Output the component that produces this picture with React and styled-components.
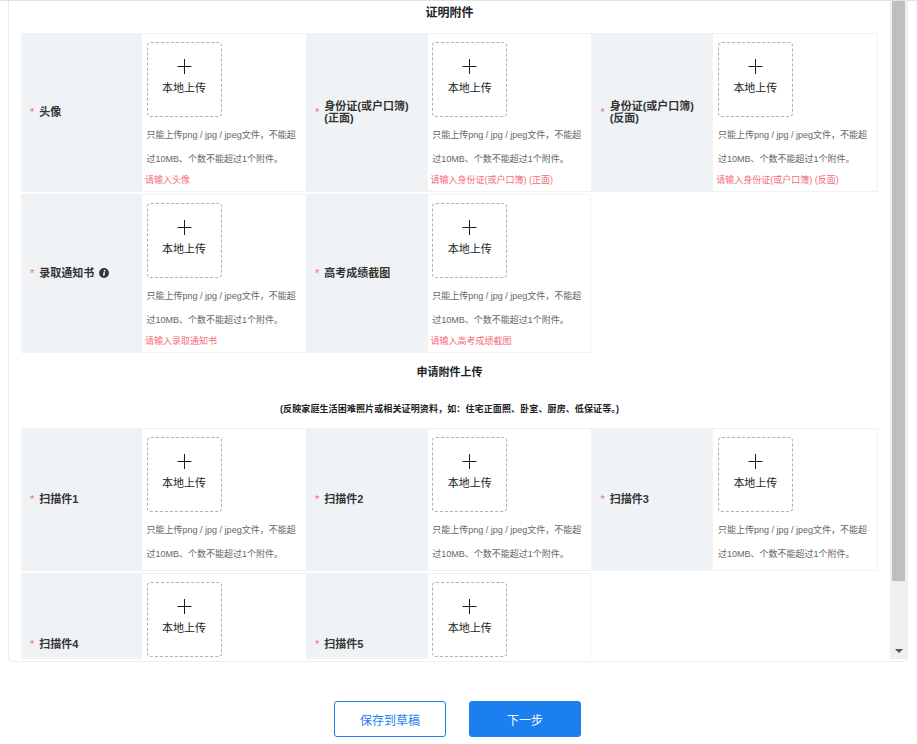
import React from "react";
import styled, { createGlobalStyle } from "styled-components";

const Global = createGlobalStyle`
  html, body { margin: 0; padding: 0; background: #fff; }
  body { font-family: "Liberation Sans", "Noto Sans CJK SC", sans-serif; }
  * { box-sizing: border-box; }
`;
const Page = styled.div`
  width: 917px; height: 744px; border-top: 1px solid #e2e2e2; overflow: hidden;
`;
const Panel = styled.div`
  margin: 0 9px 0 8px; height: 661px; padding-bottom: 2px; display: flex;
  border: 1px solid #eee; border-top: 0; border-radius: 0 0 5px 5px;
`;
const Viewport = styled.div`flex: 1; min-width: 0; overflow: hidden; padding: 0 12px;`;
const Title = styled.div`
  font-size: ${p => p.$size}px; font-weight: 700; color: #222; text-align: center; line-height: 16px;
  margin: ${p => p.$top}px 0 ${p => p.$bottom}px;
`;
const Note = styled.div`
  font-size: 9px; letter-spacing: .12px; font-weight: 700; color: #222; text-align: center; line-height: 14px; margin: 0 0 12px;
`;
const Table = styled.div`
  display: grid; grid-template-columns: 121px 164px 121.6px 163.8px 121.9px 165px; row-gap: 2px; width: 857px;
`;
const Label = styled.div`
  background: #f0f3f6; display: flex; align-items: center; padding-left: 9px;
  font-size: 11px; font-weight: 700; color: #333; line-height: 11.5px;
`;
const Star = styled.span`color: #f56c7a; font-weight: 400; margin-right: 5px; font-size: 11px; flex: none;`;
const Info = styled.span`display: inline-flex; margin-left: 5px; vertical-align: -1px;`;
const Value = styled.div`
  border: 1px solid #f2f2f2; border-left: 0; padding: 8px 4px 0 4.6px; height: ${p => p.$h}px; overflow: hidden;
  ${p => p.$end ? "" : "border-right: 0;"}
`;
const Upload = styled.div`
  width: 75px; height: 75px; border: 1px dashed #b0b0b0; border-radius: 4px;
  display: flex; flex-direction: column; align-items: center; padding-top: 16px;
  font-size: 11px; color: #222; line-height: 14px;
`;
const Plus = styled.svg`display: block; margin-bottom: 7px;`;
const Help = styled.div`
  font-size: 9px; color: #666; line-height: 24px; margin-top: 6px; width: 155px; white-space: pre;
`;
const Err = styled.div`
  font-size: 9px; color: #f56c7a; line-height: 18px; margin-left: -1.6px; white-space: nowrap;
`;
const Track = styled.div`
  width: 17px; flex: none; background: #efefef; position: relative; padding: 0 2px; height: 658px;
`;
const Thumb = styled.div`width: 13px; height: 580px; background: #bfbfbf;`;
const Arrow = styled.div`
  position: absolute; left: 5px; bottom: 6px; width: 0; height: 0;
  border-left: 4px solid transparent; border-right: 4px solid transparent; border-top: 4px solid #555;
`;
const Footer = styled.div`display: flex; justify-content: center; gap: 23px; margin-top: 39px; padding-right: 2px;`;
const Btn = styled.button`
  width: 112px; height: 36px; border-radius: 3px; font: 12px "Liberation Sans", "Noto Sans CJK SC", sans-serif;
  border: 1px solid #1b7ff0; background: ${p => p.$primary ? "#1b7ff0" : "#fff"};
  color: ${p => p.$primary ? "#fff" : "#1b7ff0"}; padding: 0;
`;

const PlusIcon = () => (
  <Plus width="15" height="15" viewBox="0 0 15 15"><path d="M.5 7.5h14M7.5 0v15" stroke="#1a1a2e" strokeWidth="1" fill="none" /></Plus>
);
const InfoIcon = () => (
  <Info><svg width="10" height="10" viewBox="0 0 10 10"><circle cx="5" cy="5" r="4.9" fill="#333" /><path d="M4.5 4.2h1.6L5.5 7.8H4zM4.9 2h1.6l-.2 1.4H4.7z" fill="#fff" /></svg></Info>
);
const Cell = ({ label, err, h, end, info }) => (
  <>
    <Label><Star>*</Star><span>{label}{info && <InfoIcon />}</span></Label>
    <Value $h={h} $end={end}>
      <Upload><PlusIcon />本地上传</Upload>
      <Help>只能上传png / jpg / jpeg文件，不能超{"\n"}过10MB、个数不能超过1个附件。</Help>
      {err && <Err>{err}</Err>}
    </Value>
  </>
);

export default function App() {
  return (
    <Page>
      <Global />
      <Panel>
        <Viewport>
          <Title $size={12} $top={4} $bottom={12}>证明附件</Title>
          <Table>
            <Cell h={159} label="头像" err="请输入头像" />
            <Cell h={159} label={<>身份证(或户口簿)<br />(正面)</>} err="请输入身份证(或户口簿) (正面)" />
            <Cell h={159} end label={<>身份证(或户口簿)<br />(反面)</>} err="请输入身份证(或户口簿) (反面)" />
            <Cell h={159} label="录取通知书" info err="请输入录取通知书" />
            <Cell h={159} end label="高考成绩截图" err="请输入高考成绩截图" />
          </Table>
          <Title $size={11} $top={11} $bottom={22}>申请附件上传</Title>
          <Note>(反映家庭生活困难照片或相关证明资料，如：住宅正面照、卧室、厨房、低保证等。)</Note>
          <Table>
            <Cell h={143} label="扫描件1" />
            <Cell h={143} label="扫描件2" />
            <Cell h={143} end label="扫描件3" />
            <Cell h={143} label="扫描件4" />
            <Cell h={143} end label="扫描件5" />
          </Table>
        </Viewport>
        <Track><Thumb /><Arrow /></Track>
      </Panel>
      <Footer>
        <Btn>保存到草稿</Btn>
        <Btn $primary>下一步</Btn>
      </Footer>
    </Page>
  );
}
